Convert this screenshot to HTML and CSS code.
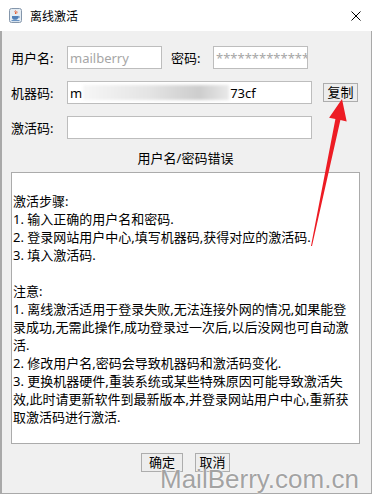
FILE: index.html
```html
<!DOCTYPE html>
<html lang="zh-CN">
<head>
    <meta charset="UTF-8">
    <title>离线激活</title>
    <link rel="stylesheet" href="styles.css">
</head>
<body>
    <div class="window">
        <div class="titlebar">
            <svg class="title-icon" viewBox="0 0 13 15">
                <rect x="0.5" y="0.5" width="12" height="14" rx="2" fill="#e4ecf3" stroke="#8496ab"/>
                <path d="M6.5 2.5c-1.5 1.2 1 2-0.2 3.5M8 3.2c-1 0.8 0.6 1.3-0.3 2.3" fill="none" stroke="#e2572b" stroke-width="1"/>
                <path d="M3 8h6.2v1.4c0 1.4-1.3 2.3-3.1 2.3S3 10.8 3 9.4z" fill="#4f7fb8"/>
                <path d="M9.2 8.4h1v1.3h-1" fill="none" stroke="#4f7fb8" stroke-width="0.8"/>
                <path d="M2.5 12.6h8" stroke="#4f7fb8" stroke-width="0.9"/>
            </svg>
            <span class="title">离线激活</span>
            <svg class="close" viewBox="0 0 10 10">
                <path d="M0.5 0.5l9 9M9.5 0.5l-9 9" stroke="#000" stroke-width="1"/>
            </svg>
        </div>
        <div class="content">
            <div class="row">
                <span class="label">用户名:</span>
                <div class="field small hint">mailberry</div>
                <span class="label second">密码:</span>
                <div class="field small hint">***************</div>
            </div>
            <div class="row">
                <span class="label">机器码:</span>
                <div class="field wide">m<span class="mask"></span>73cf</div>
                <button class="btn copy">复制</button>
            </div>
            <div class="row last">
                <span class="label">激活码:</span>
                <div class="field wide"></div>
            </div>
            <div class="status">用户名/密码错误</div>
            <div class="notes">
                <div>&nbsp;</div>
                <div>激活步骤:</div>
                <div>1. 输入正确的用户名和密码.</div>
                <div>2. 登录网站用户中心,填写机器码,获得对应的激活码.</div>
                <div>3. 填入激活码.</div>
                <div>&nbsp;</div>
                <div>注意:</div>
                <div>1. 离线激活适用于登录失败,无法连接外网的情况,如果能登</div>
                <div>录成功,无需此操作,成功登录过一次后,以后没网也可自动激</div>
                <div>活.</div>
                <div>2. 修改用户名,密码会导致机器码和激活码变化.</div>
                <div>3. 更换机器硬件,重装系统或某些特殊原因可能导致激活失</div>
                <div>效,此时请更新软件到最新版本,并登录网站用户中心,重新获</div>
                <div>取激活码进行激活.</div>
            </div>
            <div class="actions">
                <button class="btn ok">确定</button>
                <button class="btn cancel">取消</button>
            </div>
        </div>

        <!-- annotation overlays -->
        <svg class="arrow" viewBox="0 0 372 494">
            <polygon points="342,99 346.7,121.4 340.4,120.1 312,246 311,246 335.4,119.1 329.1,117.8" fill="#ed1c24"/>
        </svg>
        <div class="watermark">MailBerry.com.cn</div>
    </div>
</body>
</html>
```

FILE: styles.css
```css
body {
    margin: 0;
    font-family: "Noto Sans", "Noto Sans CJK SC", sans-serif;
    font-size: 13px;
    color: #000;
}
.window {
    position: relative;
    width: 372px;
    height: 494px;
    display: flex;
    flex-direction: column;
    background-color: #f0f0f0;
    overflow: hidden;
}
.titlebar {
    height: 31px;
    flex: none;
    background-color: #fff;
    display: flex;
    align-items: center;
    padding: 0 11px 0 9px;
}
.title-icon {
    width: 13px;
    height: 15px;
    margin-right: 8px;
}
.title {
    flex: 1;
    font-size: 12px;
}
.close {
    width: 10px;
    height: 10px;
}
.content {
    flex: 1;
    border-left: 2px solid #a9a9a9;
    border-right: 1px solid #a9a9a9;
    border-bottom: 1px solid #a9a9a9;
    padding: 15px 11px 0 9px;
}
.row {
    display: flex;
    align-items: center;
    height: 23px;
    margin-bottom: 12px;
}
.row.last {
    margin-bottom: 0;
}
.label {
    width: 56px;
    flex: none;
}
.label.second {
    width: 42px;
    margin-left: 9px;
}
.field {
    height: 23px;
    box-sizing: border-box;
    border: 1px solid #bdbdbd;
    background-color: #fff;
    padding: 0 2px;
    display: flex;
    align-items: center;
    overflow: hidden;
    white-space: nowrap;
}
.field.small {
    width: 95px;
}
.field.wide {
    width: 245px;
}
.hint {
    color: #a6a6a6;
}
.mask {
    display: inline-block;
    width: 146px;
    height: 15px;
    margin: 0 1px;
    background: linear-gradient(to right, #f6f6f6, #ececec 25%, #e4e4e4 45%, #d6d6d6 65%, #cdcdcd 80%, #e9e9e9);
    filter: blur(1.5px);
}
.btn {
    height: 19px;
    box-sizing: border-box;
    border: 1px solid #adadad;
    background-color: #ededed;
    font: inherit;
    line-height: 17px;
    padding: 0;
    color: #000;
}
.copy {
    width: 35px;
    margin-left: 11px;
}
.status {
    margin-top: 9px;
    height: 20px;
    line-height: 20px;
    text-align: center;
}
.notes {
    margin-top: 4px;
    height: 272px;
    box-sizing: border-box;
    border: 1px solid #ababab;
    background-color: #fff;
    padding: 1px;
    line-height: 18px;
    white-space: nowrap;
    overflow: hidden;
}
.actions {
    display: flex;
    justify-content: center;
    gap: 12px;
    margin-top: 9px;
}
.ok {
    width: 42px;
}
.cancel {
    width: 35px;
}
.arrow {
    position: absolute;
    left: 0;
    top: 0;
    width: 372px;
    height: 494px;
    pointer-events: none;
}
.watermark {
    position: absolute;
    left: 160px;
    top: 466px;
    font-family: "Liberation Sans", Arial, sans-serif;
    font-size: 26px;
    line-height: 26px;
    color: #a3a3a3;
    text-shadow: 0 0 2px #fff, 0 0 1px #fff;
    white-space: nowrap;
}
```
